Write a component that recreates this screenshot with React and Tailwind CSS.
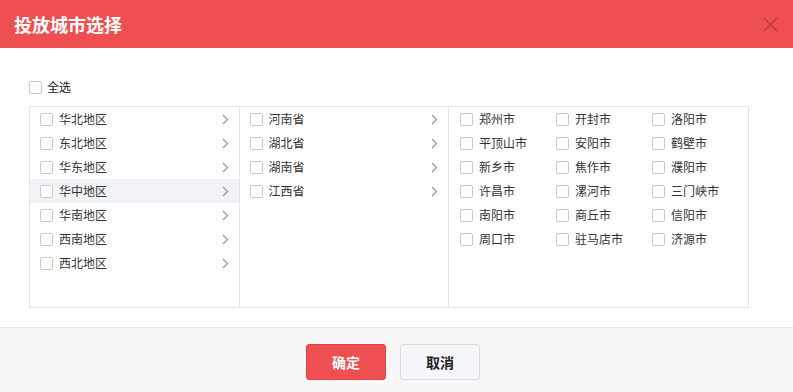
import React from 'react';

const regions = ['华北地区', '东北地区', '华东地区', '华中地区', '华南地区', '西南地区', '西北地区'];
const provinces = ['河南省', '湖北省', '湖南省', '江西省'];
const cities = [
  '郑州市', '开封市', '洛阳市',
  '平顶山市', '安阳市', '鹤壁市',
  '新乡市', '焦作市', '濮阳市',
  '许昌市', '漯河市', '三门峡市',
  '南阳市', '商丘市', '信阳市',
  '周口市', '驻马店市', '济源市',
];

const Box = () => (
  <span className="w-[13px] h-[13px] shrink-0 rounded-[2px] border border-[#c9c9c9] bg-white" />
);

const Chevron = () => (
  <svg width="7" height="11" viewBox="0 0 7 11" className="shrink-0">
    <path d="M1 1l4.5 4.5L1 10" fill="none" stroke="#9a9a9a" strokeWidth="1.3" />
  </svg>
);

const App = () => {
  return (
    <div className="w-[793px] h-[392px] bg-white flex flex-col" style={{ fontFamily: '"Noto Sans CJK SC", "Liberation Sans", sans-serif' }}>
      {/* 标题栏 */}
      <div className="h-[48px] shrink-0 bg-[#ef4f50] flex items-center justify-between pl-[14px] pr-[15px]">
        <span className="text-white text-[18px] font-bold leading-none">投放城市选择</span>
        <svg width="15" height="15" viewBox="0 0 15 15">
          <path d="M1 1l13 13M14 1L1 14" stroke="#b83a3c" strokeWidth="1.3" />
        </svg>
      </div>

      <div className="flex-1 pl-[29px] pt-[32px]">
        <label className="flex items-center gap-[5px] h-[14px] text-[12px] text-[#222]">
          <Box />
          <span>全选</span>
        </label>

        <div className="mt-[12px] w-[720px] h-[202px] border border-[#e3e3ea] flex">
          {/* 地区 */}
          <div className="w-[212px] border-r border-[#e3e3ea] flex flex-col">
            {regions.map(r => (
              <div key={r} className={`h-[24px] flex items-center pl-[10px] pr-[10px] text-[12px] text-[#333] ${r === '华中地区' ? 'bg-[#f0f2f5]' : ''}`}>
                <Box />
                <span className="ml-[6px] flex-1">{r}</span>
                <Chevron />
              </div>
            ))}
          </div>
          {/* 省份 */}
          <div className="w-[212px] border-r border-[#e3e3ea] flex flex-col">
            {provinces.map(p => (
              <div key={p} className="h-[24px] flex items-center pl-[10px] pr-[10px] text-[12px] text-[#333]">
                <Box />
                <span className="ml-[6px] flex-1">{p}</span>
                <Chevron />
              </div>
            ))}
          </div>
          {/* 城市 */}
          <div className="flex-1 pl-[11px] grid grid-cols-[96px_96px_96px] auto-rows-[24px] content-start">
            {cities.map(c => (
              <div key={c} className="flex items-center text-[12px] text-[#333]">
                <Box />
                <span className="ml-[6px]">{c}</span>
              </div>
            ))}
          </div>
        </div>
      </div>

      {/* 底部按钮 */}
      <div className="h-[65px] shrink-0 bg-[#f8f8f9] border-t border-[#e8e8ec] flex items-start justify-center gap-[14px] pt-[16px] pr-[7px]">
        <button className="w-[80px] h-[36px] rounded-[3px] bg-[#ef4f50] border border-[#e04546] text-white text-[14px] font-bold">确定</button>
        <button className="w-[80px] h-[36px] rounded-[3px] bg-[#f5f7fa] border border-[#d8dce3] text-[#222] text-[14px] font-bold">取消</button>
      </div>
    </div>
  );
};

export default App;
